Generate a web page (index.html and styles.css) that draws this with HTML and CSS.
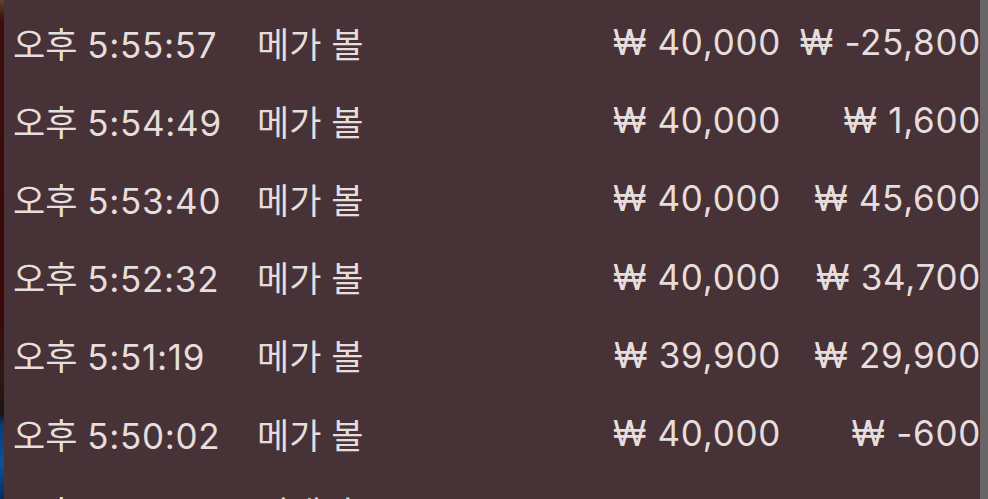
FILE: index.html
```html
<!DOCTYPE html>
<html lang="ko">
<head>
<meta charset="utf-8">
<link rel="stylesheet" href="styles.css">
</head>
<body>
<div class="screen">
  <div class="edge-left"></div>
  <div class="panel">
    <div class="row"><span class="time">오후 <span class="num">5:55:57</span></span><span class="name">메가 볼</span><span class="amt num">₩ 40,000</span><span class="diff num">₩ -25,800</span></div>
    <div class="row"><span class="time">오후 <span class="num">5:54:49</span></span><span class="name">메가 볼</span><span class="amt num">₩ 40,000</span><span class="diff num">₩ 1,600</span></div>
    <div class="row"><span class="time">오후 <span class="num">5:53:40</span></span><span class="name">메가 볼</span><span class="amt num">₩ 40,000</span><span class="diff num">₩ 45,600</span></div>
    <div class="row"><span class="time">오후 <span class="num">5:52:32</span></span><span class="name">메가 볼</span><span class="amt num">₩ 40,000</span><span class="diff num">₩ 34,700</span></div>
    <div class="row"><span class="time">오후 <span class="num">5:51:19</span></span><span class="name">메가 볼</span><span class="amt num">₩ 39,900</span><span class="diff num">₩ 29,900</span></div>
    <div class="row"><span class="time">오후 <span class="num">5:50:02</span></span><span class="name">메가 볼</span><span class="amt num">₩ 40,000</span><span class="diff num">₩ -600</span></div>
    <div class="row"><span class="time">오후 <span class="num">5:48:51</span></span><span class="name">번개킹</span><span class="amt num"></span><span class="diff num"></span></div>
  </div>
  <div class="edge-right"></div>
</div>
</body>
</html>
```
FILE: styles.css
```css
html, body {
  margin: 0;
  padding: 0;
  background: #463237;
}
.screen {
  width: 988px;
  height: 499px;
  overflow: hidden;
  display: flex;
}
.edge-left {
  width: 4px;
  flex: none;
  background: linear-gradient(to bottom, #5a4630 0%, #3c0c0c 4%, #3a0808 62%, #2c1a10 76%, #1a1410 83%, #0c3c78 85%, #10509a 93%, #082a5a 100%);
}
.edge-right {
  width: 8px;
  flex: none;
  position: relative;
  background: #6b6466;
}
.panel {
  flex: 1;
  min-width: 0;
  background: #463237;
  padding: 3px 0 0 9px;
  color: #e6dddd;
  font-family: Inter, "Noto Sans CJK KR", sans-serif;
  font-size: 35px;
  font-weight: 400;
}
.row {
  display: grid;
  grid-template-columns: 244px 344px 180px 200px;
  height: 78.2px;
  align-items: center;
  white-space: nowrap;
}
.num {
  letter-spacing: 0.7px;
}
.amt, .diff {
  text-align: right;
}
```
